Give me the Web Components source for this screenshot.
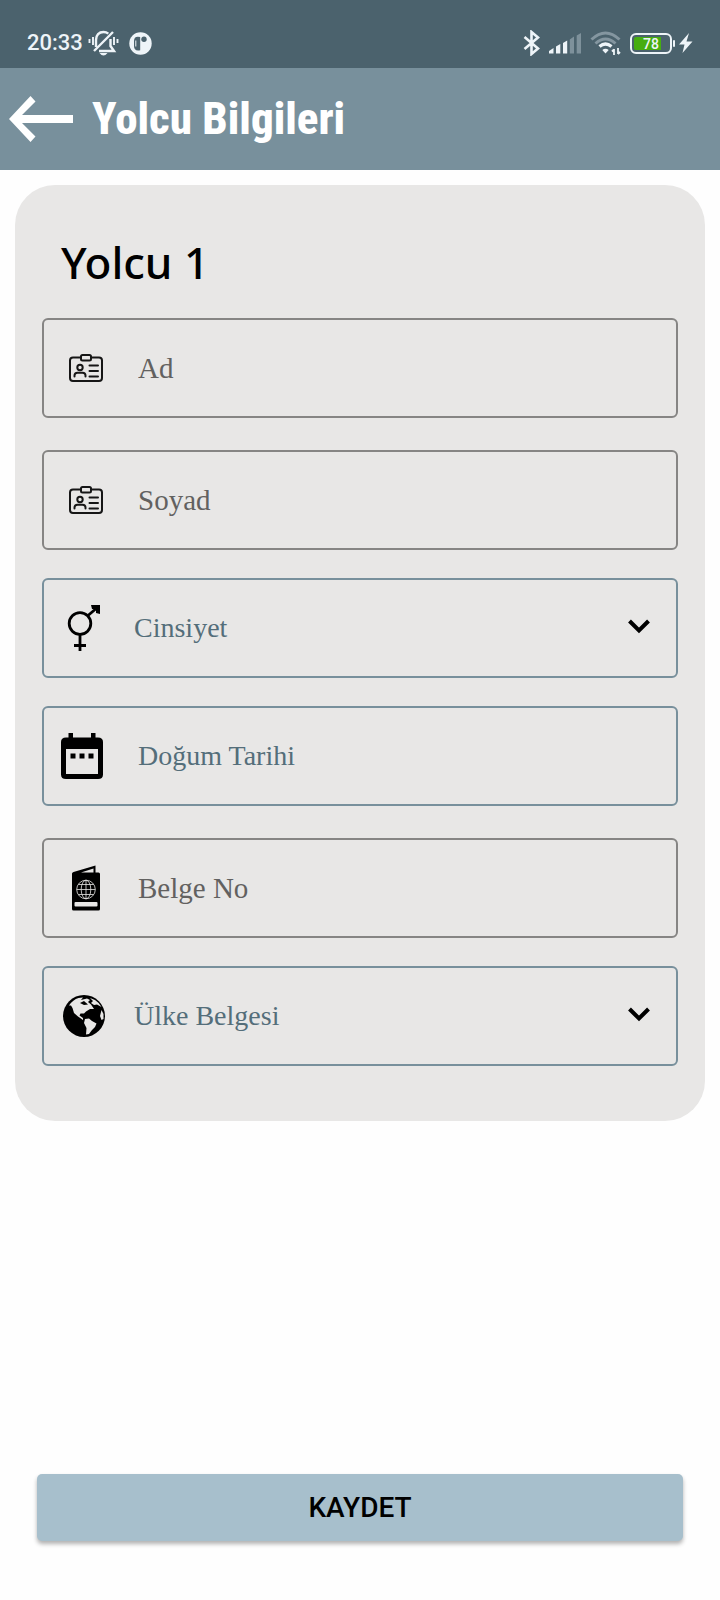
<!DOCTYPE html>
<html lang="tr">
<head>
<meta charset="utf-8">
<meta name="viewport" content="width=device-width, initial-scale=1">
<title>Yolcu Bilgileri</title>
<style>
  html, body { margin: 0; background: #fefefe; }
  body { font-family: Roboto, "Liberation Sans", sans-serif; color: #000; }
</style>
</head>
<body>
<passenger-page></passenger-page>

<template id="t-status">
  <style>
    :host { display: flex; align-items: center; justify-content: space-between; box-sizing: border-box; height: 68px; padding: 18px 27px 0; background: #4b626d; color: #eef4f8; font-size: 22px; font-weight: 500; line-height: 24px; }
    .side { display: flex; align-items: center; }
    .left svg + svg { margin-left: 10px; }
    time { margin-right: 5px; }
    .right { gap: 9px; }
    .power { display: flex; align-items: center; gap: 4px; }
    svg { display: block; }
    .battery { display: flex; align-items: center; }
    .shell { box-sizing: border-box; display: flex; width: 42px; height: 21px; border: 2px solid #eef4f8; border-radius: 6px; padding: 2px; }
    .level { flex: 1; border-radius: 2px; background: linear-gradient(90deg, #46ad10 78%, transparent 78%); font-size: 14px; line-height: 14px; text-align: center; }
    .nub { width: 2px; height: 7px; margin-left: 1px; background: #eef4f8; border-radius: 1px; }
  </style>
  <div class="side left">
    <time>20:33</time>
    <svg width="31" height="26" viewBox="0 0 31 26" fill="none" stroke="#eef4f8" stroke-width="2.400" aria-hidden="true">
      <path d="M8 17V10C8 5 11 2 15.500 2C17.500 2 19 2.600 20.300 3.700M22.500 9V16L26 21H11M6 21L25 2"/>
      <path d="M5 7V15M1.500 9V13M26 7V15M29.500 9V13" stroke-width="1.900"/>
      <path d="M11.500 23H19.500Q15.500 28 11.500 23Z" fill="#eef4f8" stroke="none"/>
    </svg>
    <svg width="23" height="23" viewBox="0 0 23 23" aria-hidden="true">
      <circle cx="11.500" cy="11.500" r="11.200" fill="#eef4f8"/>
      <path d="M11.200 5V18.200Q5 19.500 5 14V9Q5 3.500 11.200 5Z" fill="#4b626d"/>
      <path d="M6.800 8.500V14.500" stroke="#eef4f8" stroke-width="1"/>
      <circle cx="15" cy="7.300" r="2.700" fill="#4b626d"/>
    </svg>
  </div>
  <div class="side right">
    <svg width="17" height="26" viewBox="0 0 17 26" fill="none" stroke="#eef4f8" stroke-width="2.600" aria-hidden="true"><path d="M1.500 7L15 18.500L8.500 24V2L15 7.500L1.500 19"/></svg>
    <svg width="32" height="21" viewBox="0 0 32 21" aria-hidden="true">
      <path d="M0 20.500V18L4.500 15V20.500ZM7 20.500V13.500L11.300 11V20.500ZM14 20.500V10L18.200 7.500V20.500Z" fill="#eef4f8"/>
      <path d="M20.800 20.500V6.500L25 3.500V20.500ZM27.700 20.500V2.500L32 0V20.500Z" fill="#7e919b"/>
    </svg>
    <svg width="31" height="24" viewBox="0 0 31 24" fill="none" aria-hidden="true">
      <path d="M1.500 8.500Q15.500-4.500 29.500 8.500M5.500 12.500Q15.500 3.500 25.500 12.500" stroke="#8496a0" stroke-width="3"/>
      <path d="M9.500 15.500Q15.500 10.500 21.500 15.500" stroke="#eef4f8" stroke-width="3.200"/>
      <path d="M12.300 19Q15.500 16.500 18.700 19L15.500 22.500Z" fill="#eef4f8"/>
      <path d="M24 24V18M22 20.500L24 18.500M28 17V23M30 21L28 23" stroke="#eef4f8" stroke-width="1.800"/>
    </svg>
    <div class="power">
      <div class="battery"><div class="shell"><span class="level">78</span></div><div class="nub"></div></div>
      <svg width="14" height="20" viewBox="0 0 14 20" aria-hidden="true"><path d="M10 0L0 11.500H5.500L3.500 20L13.500 8.500H7.500Z" fill="#eef4f8"/></svg>
    </div>
  </div>
</template>

<template id="t-bar">
  <style>
    :host { display: flex; align-items: center; gap: 19px; box-sizing: border-box; height: 102px; padding: 0 9px; background: #78909c; color: #fff; }
    button { padding: 0; border: 0; background: none; color: inherit; }
    svg { display: block; }
    h1 { margin: 0; font: 800 45px/60px "Roboto Condensed", "Liberation Sans Narrow", Roboto, sans-serif; white-space: nowrap; }
  </style>
  <button type="button" aria-label="Geri">
    <svg width="64" height="46" viewBox="0 0 64 46" aria-hidden="true"><path d="M21.500 0L0 23L21.500 46L26.500 40.500L13 27H64V19H13L26.500 5.500Z" fill="#fff"/></svg>
  </button>
  <h1><slot></slot></h1>
</template>

<template id="t-card">
  <style>
    :host { display: block; margin: 15px; padding: 53px 27px 55px; border-radius: 40px; background: #e8e7e6; }
    h2 { margin: 0; padding-left: 19px; font: 500 44px/48px "Noto Sans", "Open Sans", sans-serif; }
  </style>
  <h2><slot name="title"></slot></h2>
  <slot></slot>
</template>

<template id="t-field">
  <style>
    :host { --line: #868584; --ink: #626160; --size: 29px; display: flex; align-items: center; box-sizing: border-box; height: 100px; margin-top: 32px; padding: 0 26px 0 16px; border: 2px solid var(--line); border-radius: 6px; }
    :host([kind="select"]), :host([kind="date"]) { --line: #78909c; --ink: #546e7a; --size: 28px; margin-top: 28px; }
    .icon { display: flex; flex: none; justify-content: center; width: 52px; margin-right: 26px; }
    :host([kind="select"]) .icon { width: 48px; }
    :host([kind="date"]) .icon { width: 44px; margin-right: 34px; }
    .box { flex: 1; min-width: 0; display: flex; }
    input, select { flex: 1; min-width: 0; height: 60px; margin: 0; padding: 0; border: 0; outline: 0; background: none; appearance: none; color: var(--ink); font: 400 var(--size)/60px "Liberation Serif", serif; }
    input::placeholder { color: var(--ink); opacity: 1; }
    .chevron { flex: none; display: block; }
  </style>
  <span class="icon"><slot></slot></span>
  <span class="box"></span>
</template>

<template id="t-action">
  <style>
    :host { display: block; }
    button { display: block; width: 100%; height: 67px; padding: 0; border: 0; border-radius: 5px; background: #a7bfcc; box-shadow: 0 3px 4px #0000004d; color: #000; font: 500 28px/32px Roboto, sans-serif; }
  </style>
  <button type="button"><slot></slot></button>
</template>

<template id="t-icon">
  <style>
    :host { display: block; }
    svg { display: block; }
  </style>
</template>

<template id="t-page">
  <style>
    :host { display: flex; flex-direction: column; min-height: 100vh; }
    footer { margin-top: auto; padding: 0 37px 59px; }
  </style>
  <status-bar></status-bar>
  <app-bar>Yolcu Bilgileri</app-bar>
  <main>
    <passenger-card>
      <span slot="title">Yolcu 1</span>
      <form-field kind="text" label="Ad"><field-icon name="badge"></field-icon></form-field>
      <form-field kind="text" label="Soyad"><field-icon name="badge"></field-icon></form-field>
      <form-field kind="select" label="Cinsiyet" options="Kadın,Erkek"><field-icon name="gender"></field-icon></form-field>
      <form-field kind="date" label="Doğum Tarihi"><field-icon name="calendar"></field-icon></form-field>
      <form-field kind="text" label="Belge No"><field-icon name="passport"></field-icon></form-field>
      <form-field kind="select" label="Ülke Belgesi" options="Türkiye,Almanya"><field-icon name="globe"></field-icon></form-field>
    </passenger-card>
  </main>
  <footer><action-button>KAYDET</action-button></footer>
</template>

<script>
const icons = {
  badge: `<svg width="34" height="28" viewBox="0 0 34 28" fill="none" stroke="#161616" stroke-width="2" stroke-linecap="round" stroke-linejoin="round">
    <path d="M12 3.500H4Q1 3.500 1 6.500V24Q1 27 4 27H30Q33 27 33 24V6.500Q33 3.500 30 3.500H22"/>
    <rect x="12" y="1" width="10" height="5.500" rx="1.500"/><circle cx="11" cy="13.500" r="2.700"/>
    <path d="M5.500 22.500V21.500Q5.500 18.700 8.500 18.700H13.500Q16.500 18.700 16.500 21.500V22.500M20.500 11.500H29M20.500 17H29M20.500 22.500H29"/></svg>`,
  gender: `<svg width="40" height="46" viewBox="0 0 40 46" fill="none" stroke="#000" stroke-width="2.800">
    <circle cx="16" cy="18.500" r="10.800"/>
    <path d="M24 10.500L34 2M16 29.500V46M10 40.500H22" stroke-width="2.800"/><path d="M27 0H36V9L32 8V4H28Z" fill="#000" stroke="none"/></svg>`,
  calendar: `<svg width="42" height="46" viewBox="0 0 42 46">
    <path fill-rule="evenodd" d="M5 4.500H7.500V0H12V4.500H30V0H34.500V4.500H37Q42 4.500 42 9V41.500Q42 46 37 46H5Q0 46 0 41.500V9Q0 4.500 5 4.500ZM5 16V41H37V16Z"/>
    <path d="M9.500 20.500H14.500V25.500H9.500ZM18.500 20.500H23.500V25.500H18.500ZM27.500 20.500H32.500V25.500H27.500Z"/></svg>`,
  passport: `<svg width="28" height="46" viewBox="0 0 28 46">
    <path fill-rule="evenodd" d="M0 8.500Q0 7.500 1.500 7L23.500 .5V7.500H26.500Q28 7.500 28 9V44Q28 45.500 26.500 45.500H1.500Q0 45.500 0 44ZM9 7.500H21.500V3.500ZM3.500 37Q2.500 37 2.500 38V40.500Q2.500 41.500 3.500 41.500H24.500Q25.500 41.500 25.500 40.500V38Q25.500 37 24.500 37Z"/>
    <g fill="none" stroke="#e8e7e6" stroke-width=".8"><circle cx="14" cy="24.500" r="9.300"/><ellipse cx="14" cy="24.500" rx="4.800" ry="9.300"/><path d="M14 15.200V33.800M4.700 24.500H23.300M6.500 19.500H21.500M6.500 29.500H21.500"/></g></svg>`,
  globe: `<svg width="42" height="42" viewBox="0 0 42 42">
    <circle cx="21" cy="21" r="21"/>
    <g fill="#e8e7e6"><path d="M6 10.500Q10 4.500 15.500 3L20 2.500L18 5L24 3.500L27 5L25 7L28 9.500L31 14L27 14L23 16.500L21 18.500L17.500 18.500L16.500 20.500L20 23L20 25L15 21.500L11 18L9.500 13L8 10.500Z"/>
    <path d="M27 3L32 5Q36 7.500 38.500 12L34 9.500L31 10L28 8L30 6Z"/>
    <path d="M22 24L26 23.500L29 26L33.500 28.500L32 32L29 35L26 39L23 39.500L23.500 33L21 28Z"/>
    <path d="M38.500 15L40.500 19V24L38.500 25L37 21Z"/></g>
    <path d="M17 8L21 6L25 9.500L21 10Z"/></svg>`
};
const chevron = `<svg class="chevron" width="22" height="60" viewBox="0 0 22 60" fill="none" stroke="#000" stroke-width="4" aria-hidden="true"><path d="M1.500 23L11 32.500L20.500 23"/></svg>`;

function stamp(host, id) {
  const root = host.attachShadow({ mode: "open" });
  root.append(document.getElementById(id).content.cloneNode(true));
  return root;
}

customElements.define("status-bar", class extends HTMLElement {
  constructor() { super(); stamp(this, "t-status"); }
});
customElements.define("app-bar", class extends HTMLElement {
  constructor() { super(); stamp(this, "t-bar"); }
});
customElements.define("passenger-card", class extends HTMLElement {
  constructor() { super(); stamp(this, "t-card"); }
});
customElements.define("action-button", class extends HTMLElement {
  constructor() { super(); stamp(this, "t-action"); }
});
customElements.define("field-icon", class extends HTMLElement {
  constructor() { super(); stamp(this, "t-icon"); }
  connectedCallback() {
    if (this.shadowRoot.querySelector("svg")) return;
    this.shadowRoot.querySelector("style").insertAdjacentHTML("afterend", icons[this.getAttribute("name")]);
    this.setAttribute("aria-hidden", "true");
  }
});
customElements.define("form-field", class extends HTMLElement {
  constructor() { super(); stamp(this, "t-field"); }
  connectedCallback() {
    const box = this.shadowRoot.querySelector(".box");
    if (box.firstChild) return;
    const label = this.getAttribute("label");
    const isSelect = this.getAttribute("kind") === "select";
    const control = document.createElement(isSelect ? "select" : "input");
    control.setAttribute("aria-label", label);
    box.append(control);
    if (isSelect) {
      control.add(new Option(label, ""));
      for (const name of this.getAttribute("options").split(",")) control.add(new Option(name));
      box.insertAdjacentHTML("beforeend", chevron);
    } else {
      control.type = "text";
      control.placeholder = label;
    }
  }
});
customElements.define("passenger-page", class extends HTMLElement {
  constructor() { super(); stamp(this, "t-page"); }
});
</script>
</body>
</html>
